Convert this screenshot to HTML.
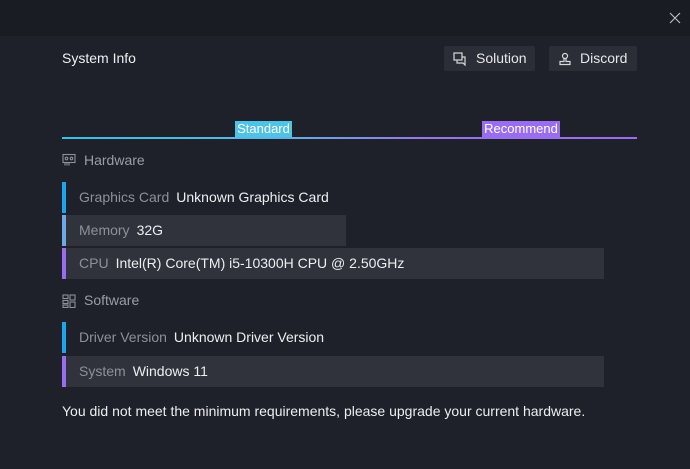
<!DOCTYPE html>
<html><head><style>
*{margin:0;padding:0;box-sizing:border-box}
body{width:690px;height:469px;background:#1e2129;font-family:"Liberation Sans",sans-serif;position:relative;overflow:hidden;color:#e8e9ec}
.top{position:absolute;left:0;top:0;width:690px;height:36px;background:#1a1c23}
.a{position:absolute;white-space:nowrap}
.btn{position:absolute;top:46px;height:25px;background:#2b2e36;border-radius:2px;font-size:14px;color:#e6e7ea;line-height:25px}
.row{position:absolute;left:62px;height:31px;font-size:14px;line-height:31px;padding-left:13px;border-left:4px solid #1aa6ee;white-space:nowrap}
.row .k{color:#8d9099;margin-right:7px}
.row .v{color:#eceef1}
.sec{position:absolute;left:84px;font-size:14px;color:#9a9da5}
</style></head><body>
<div class="top"></div>
<svg class="a" style="left:669px;top:12px" width="12" height="12" viewBox="0 0 12 12"><path d="M1 1L11 11M11 1L1 11" stroke="#b8bac0" stroke-width="1.2"/></svg>
<div class="a" style="left:62px;top:50px;font-size:14px;color:#eef0f2">System Info</div>
<div class="btn" style="left:444px;width:91px;padding-left:32px">Solution</div>
<svg class="a" style="left:453px;top:52px" width="14" height="14" viewBox="0 0 14 14" fill="none" stroke="#d8d9dc" stroke-width="1.2"><rect x="1" y="1" width="8" height="7"/><path d="M4 8v3h6l2 2V5h-3"/></svg>
<div class="btn" style="left:549px;width:88px;padding-left:31px">Discord</div>
<svg class="a" style="left:558px;top:52px" width="14" height="14" viewBox="0 0 14 14" fill="none" stroke="#d8d9dc" stroke-width="1.2"><circle cx="7" cy="4" r="2.5"/><path d="M6 6.5v3H2v3h10v-3H8v-3"/></svg>
<div class="a" style="left:235px;top:121px;width:57px;height:16px;background:#4ec3e6;color:#fff;font-size:13px;line-height:16px;text-align:center">Standard</div>
<div class="a" style="left:482px;top:121px;width:78px;height:16px;background:#9a6cf0;color:#fff;font-size:13px;line-height:16px;text-align:center">Recommend</div>
<div class="a" style="left:62px;top:137px;width:575px;height:2px;background:linear-gradient(90deg,#38bfe6,#58b8e6 35%,#9a72ec 65%,#9a6cf0)"></div>
<svg class="a" style="left:62px;top:153px" width="14" height="14" viewBox="0 0 14 14" fill="none" stroke="#8d9099" stroke-width="1.1"><rect x="1" y="1.5" width="12" height="8"/><circle cx="4.5" cy="5.5" r="1.3"/><circle cx="9.5" cy="5.5" r="1.3"/><path d="M3 9.5v3M5 9.5v3M7 9.5v3"/></svg>
<div class="sec" style="top:152px">Hardware</div>
<div class="row" style="top:182px;width:290px"><span class="k">Graphics Card</span><span class="v">Unknown Graphics Card</span></div>
<div class="row" style="top:215px;width:284px;background:#30333c;border-color:#6fa8e6"><span class="k">Memory</span><span class="v">32G</span></div>
<div class="row" style="top:248px;width:542px;background:#30333c;border-color:#9a6cf0"><span class="k">CPU</span><span class="v">Intel(R) Core(TM) i5-10300H CPU @ 2.50GHz</span></div>
<svg class="a" style="left:62px;top:294px" width="14" height="14" viewBox="0 0 14 14" fill="none" stroke="#8d9099" stroke-width="1.1"><rect x="1" y="1" width="5" height="3.5"/><rect x="1" y="6.5" width="5" height="3"/><rect x="1" y="11" width="5" height="2.5"/><rect x="8" y="1" width="5" height="5"/><rect x="8" y="8" width="5" height="5.5"/></svg>
<div class="sec" style="top:292px">Software</div>
<div class="row" style="top:322px;width:290px"><span class="k">Driver Version</span><span class="v">Unknown Driver Version</span></div>
<div class="row" style="top:356px;width:542px;background:#30333c;border-color:#9a6cf0"><span class="k">System</span><span class="v">Windows 11</span></div>
<div class="a" style="left:62px;top:403px;font-size:14px;color:#eceef1">You did not meet the minimum requirements, please upgrade your current hardware.</div>
</body></html>
